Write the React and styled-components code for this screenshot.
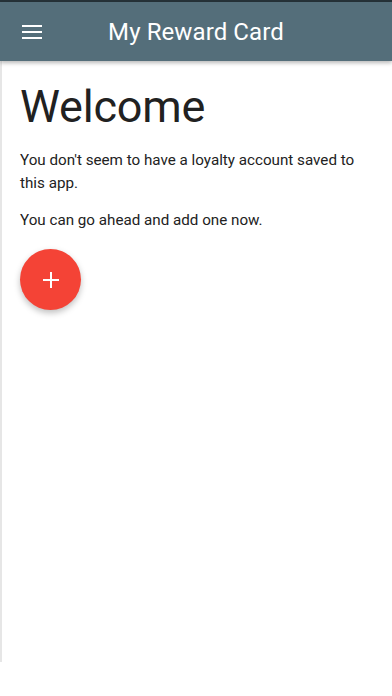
import React from "react";
import styled, { createGlobalStyle } from "styled-components";

const Global = createGlobalStyle`
  html, body { margin: 0; padding: 0; background: #ffffff; }
  body { font-family: Roboto, "Noto Sans", Arial, sans-serif; }
  * { box-sizing: border-box; }
`;

const Screen = styled.div`
  width: 392px;
  height: 696px;
  background: #fff;
  display: flex;
  flex-direction: column;
  overflow: hidden;
`;

const TopEdge = styled.div`
  height: 2px;
  background: #263238;
`;

const AppBar = styled.header`
  position: relative;
  z-index: 2;
  height: 59px;
  background: #546e7a;
  display: grid;
  grid-template-columns: 64px 1fr 64px;
  align-items: center;
  box-shadow: 0 2px 4px rgba(0, 0, 0, 0.28);
`;

const MenuButton = styled.button`
  border: 0;
  background: transparent;
  padding: 0 0 0 22px;
  height: 100%;
  display: flex;
  align-items: center;
  color: #fff;
`;

const Title = styled.h1`
  margin: 0;
  text-align: center;
  color: #fff;
  font-size: 24px;
  font-weight: 400;
  letter-spacing: 0.1px;
`;

const Body = styled.main`
  height: 601px;
  border-left: 2px solid #e6e6e6;
  padding: 18px 18px 0 18px;
  color: #212121;
`;

const Heading = styled.h2`
  margin: 0;
  font-size: 45px;
  font-weight: 400;
  line-height: 56px;
  letter-spacing: -0.2px;
  color: #212121;
`;

const Text = styled.p`
  margin: ${(p) => p.$top}px 0 0;
  font-size: 15.2px;
  line-height: 23px;
  color: #222;
`;

const Fab = styled.button`
  margin-top: 17px;
  width: 61px;
  height: 61px;
  border-radius: 50%;
  border: 0;
  background: #f44336;
  display: flex;
  align-items: center;
  justify-content: center;
  box-shadow: 0 3px 6px rgba(0, 0, 0, 0.25);
`;

export default function App() {
  return (
    <>
      <Global />
      <Screen>
        <TopEdge />
        <AppBar>
          <MenuButton aria-label="menu">
            <svg width="20" height="14" viewBox="0 0 20 14">
              <rect x="0" y="0" width="20" height="2" fill="#fff" />
              <rect x="0" y="6" width="20" height="2" fill="#fff" />
              <rect x="0" y="12" width="20" height="2" fill="#fff" />
            </svg>
          </MenuButton>
          <Title>My Reward Card</Title>
          <span />
        </AppBar>
        <Body>
          <Heading>Welcome</Heading>
          <Text $top={14}>
            You don't seem to have a loyalty account saved to this app.
          </Text>
          <Text $top={14}>You can go ahead and add one now.</Text>
          <Fab aria-label="add">
            <svg width="16" height="16" viewBox="0 0 16 16">
              <rect x="7" y="0" width="2" height="16" fill="#fff" />
              <rect x="0" y="7" width="16" height="2" fill="#fff" />
            </svg>
          </Fab>
        </Body>
      </Screen>
    </>
  );
}
